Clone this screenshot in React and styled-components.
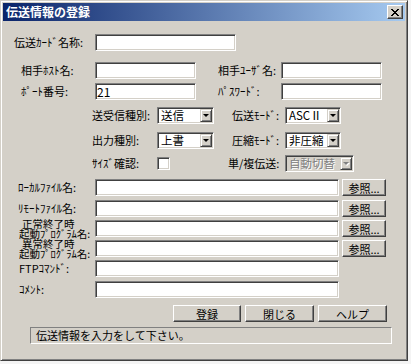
import React from 'react'
import styled, { createGlobalStyle } from 'styled-components'

const GlobalStyle = createGlobalStyle`
  body {
    margin: 0;
    background: #f4f4f4;
    font-family: "Noto Sans CJK JP", "Liberation Sans", sans-serif;
    font-size: 11px;
    color: #000;
  }
`

const Window = styled.div`
  width: 408px;
  height: 361px;
  box-sizing: border-box;
  background: #d4d0c8;
  border: 1px solid;
  border-color: #d4d0c8 #404040 #404040 #d4d0c8;
  box-shadow: inset 1px 1px 0 #fff, inset -1px -1px 0 #808080;
  padding: 2px;
  display: flex;
  flex-direction: column;
`

const TitleBar = styled.div`
  height: 18px;
  display: flex;
  align-items: center;
  justify-content: space-between;
  padding: 0 2px 0 3px;
  background: linear-gradient(to right, #0a246a, #a6caf0);
`

const Title = styled.span`
  color: #fff;
  font-weight: bold;
  font-size: 12px;
  line-height: 18px;
`

const CloseButton = styled.div`
  width: 16px;
  height: 14px;
  box-sizing: border-box;
  background: #d4d0c8;
  border: 1px solid;
  border-color: #fff #404040 #404040 #fff;
  box-shadow: inset -1px -1px 0 #808080;
  display: flex;
  align-items: center;
  justify-content: center;
`

const Body = styled.div`
  display: flex;
  flex-direction: column;
`

const Row = styled.div`
  display: flex;
  align-items: center;
  height: 17px;
  margin-top: ${p => p.$top}px;
`

const Label = styled.span`
  box-sizing: border-box;
  flex-shrink: 0;
  width: ${p => p.$w}px;
  padding-left: ${p => p.$pl}px;
  white-space: nowrap;
  line-height: 17px;
`

const TwoLineLabel = styled.span`
  box-sizing: border-box;
  flex-shrink: 0;
  align-self: flex-start;
  width: 92px;
  padding-left: 16px;
  margin-top: -1px;
  font-size: 10.5px;
  line-height: 10px;
  white-space: nowrap;
`

const FirstLine = styled.span`
  display: block;
  padding-left: 3px;
`

const sunken = `
  box-sizing: border-box;
  border: 1px solid;
  border-color: #808080 #fff #fff #808080;
  box-shadow: inset 1px 1px 0 #404040, inset -1px -1px 0 #d4d0c8;
`

const raised = `
  box-sizing: border-box;
  border: 1px solid;
  border-color: #fff #404040 #404040 #fff;
  box-shadow: inset -1px -1px 0 #808080;
  background: #d4d0c8;
`

const TextBox = styled.input`
  ${sunken}
  flex-shrink: 0;
  width: ${p => p.$w}px;
  height: 17px;
  margin: 0;
  padding: 0 1px;
  background: #fff;
  font: inherit;
  font-size: 12px;
  line-height: 15px;
  outline: none;
`

const Select = styled.div`
  ${sunken}
  flex-shrink: 0;
  display: flex;
  align-items: center;
  width: ${p => p.$w}px;
  height: 17px;
  padding: 1px;
  background: ${p => (p.$disabled ? '#d4d0c8' : '#fff')};
`

const SelectValue = styled.span`
  flex: 1;
  padding-left: 2px;
  font-size: 11.5px;
  line-height: 13px;
  white-space: nowrap;
  color: ${p => (p.$disabled ? '#808080' : '#000')};
  text-shadow: ${p => (p.$disabled ? '1px 1px 0 #fff' : 'none')};
`

const SelectArrow = styled.span`
  ${raised}
  flex-shrink: 0;
  width: 12px;
  height: 13px;
  display: flex;
  align-items: center;
  justify-content: center;
  border-color: #d4d0c8 #404040 #404040 #d4d0c8;
  box-shadow: inset 1px 1px 0 #fff, inset -1px -1px 0 #808080;
`

const Triangle = styled.span`
  width: 0;
  height: 0;
  border-left: 3px solid transparent;
  border-right: 3px solid transparent;
  border-top: 3px solid ${p => (p.$disabled ? '#808080' : '#000')};
  filter: ${p => (p.$disabled ? 'drop-shadow(1px 1px 0 #fff)' : 'none')};
`

const CheckBox = styled.span`
  ${sunken}
  flex-shrink: 0;
  width: 13px;
  height: 13px;
  background: #fff;
`

const Button = styled.button`
  ${raised}
  flex-shrink: 0;
  width: ${p => p.$w}px;
  height: 17px;
  margin: 0 0 0 ${p => p.$ml || 0}px;
  padding: 0;
  font: inherit;
  color: #000;
  line-height: 14px;
`

const ButtonBar = styled.div`
  display: flex;
  margin-top: 7px;
  padding-left: 170px;
`

const StatusBar = styled.div`
  box-sizing: border-box;
  width: 362px;
  height: 17px;
  margin: 5px 0 0 27px;
  padding-left: 5px;
  border: 1px solid;
  border-color: #808080 #fff #fff #808080;
  line-height: 15px;
`

function Dropdown({ value, width, disabled }) {
  return (
    <Select $w={width} $disabled={disabled}>
      <SelectValue $disabled={disabled}>{value}</SelectValue>
      <SelectArrow>
        <Triangle $disabled={disabled} />
      </SelectArrow>
    </Select>
  )
}

const fileRows = [
  { top: 7, label: 'ﾛｰｶﾙﾌｧｲﾙ名:' },
  { top: 4, label: 'ﾘﾓｰﾄﾌｧｲﾙ名:' },
  { top: 3, first: '正常終了時', second: '起動ﾌﾟﾛｸﾞﾗﾑ名:' },
  { top: 3, first: '異常終了時', second: '起動ﾌﾟﾛｸﾞﾗﾑ名:' },
]

export default function App() {
  return (
    <>
      <GlobalStyle />
      <Window>
        <TitleBar>
          <Title>伝送情報の登録</Title>
          <CloseButton>
            <svg width="8" height="7" viewBox="0 0 8 7">
              <path d="M0 0 L7 7 M1 0 L8 7 M7 0 L0 7 M8 0 L1 7" stroke="#000" strokeWidth="1" />
            </svg>
          </CloseButton>
        </TitleBar>
        <Body>
          <Row $top={13}>
            <Label $w={92} $pl={11}>伝送ｶｰﾄﾞ名称:</Label>
            <TextBox $w={141} />
          </Row>
          <Row $top={11}>
            <Label $w={92} $pl={18}>相手ﾎｽﾄ名:</Label>
            <TextBox $w={101} />
            <Label $w={85} $pl={22}>相手ﾕｰｻﾞ名:</Label>
            <TextBox $w={101} />
          </Row>
          <Row $top={4}>
            <Label $w={92} $pl={18}>ﾎﾟｰﾄ番号:</Label>
            <TextBox $w={101} defaultValue="21" />
            <Label $w={85} $pl={22}>ﾊﾟｽﾜｰﾄﾞ:</Label>
            <TextBox $w={101} />
          </Row>
          <Row $top={7}>
            <Label $w={154} $pl={89}>送受信種別:</Label>
            <Dropdown value="送信" width={57} />
            <Label $w={71} $pl={18}>伝送ﾓｰﾄﾞ:</Label>
            <Dropdown value="ASCⅡ" width={56} />
          </Row>
          <Row $top={8}>
            <Label $w={154} $pl={89}>出力種別:</Label>
            <Dropdown value="上書" width={57} />
            <Label $w={71} $pl={18}>圧縮ﾓｰﾄﾞ:</Label>
            <Dropdown value="非圧縮" width={56} />
          </Row>
          <Row $top={6}>
            <Label $w={154} $pl={89}>ｻｲｽﾞ確認:</Label>
            <CheckBox />
            <Label $w={115} $pl={58}>単/複伝送:</Label>
            <Dropdown value="自動切替" width={69} disabled />
          </Row>
          {fileRows.map((r, i) => (
            <Row key={i} $top={r.top}>
              {r.label ? (
                <Label $w={92} $pl={15}>{r.label}</Label>
              ) : (
                <TwoLineLabel>
                  <FirstLine>{r.first}</FirstLine>
                  {r.second}
                </TwoLineLabel>
              )}
              <TextBox $w={244} />
              <Button $w={44} $ml={3}>参照...</Button>
            </Row>
          ))}
          <Row $top={3}>
            <Label $w={92} $pl={16}>FTPｺﾏﾝﾄﾞ:</Label>
            <TextBox $w={244} />
          </Row>
          <Row $top={4}>
            <Label $w={92} $pl={16}>ｺﾒﾝﾄ:</Label>
            <TextBox $w={244} />
          </Row>
          <ButtonBar>
            <Button $w={68}>登録</Button>
            <Button $w={69} $ml={4}>閉じる</Button>
            <Button $w={69} $ml={4}>ヘルプ</Button>
          </ButtonBar>
          <StatusBar>伝送情報を入力をして下さい。</StatusBar>
        </Body>
      </Window>
    </>
  )
}
